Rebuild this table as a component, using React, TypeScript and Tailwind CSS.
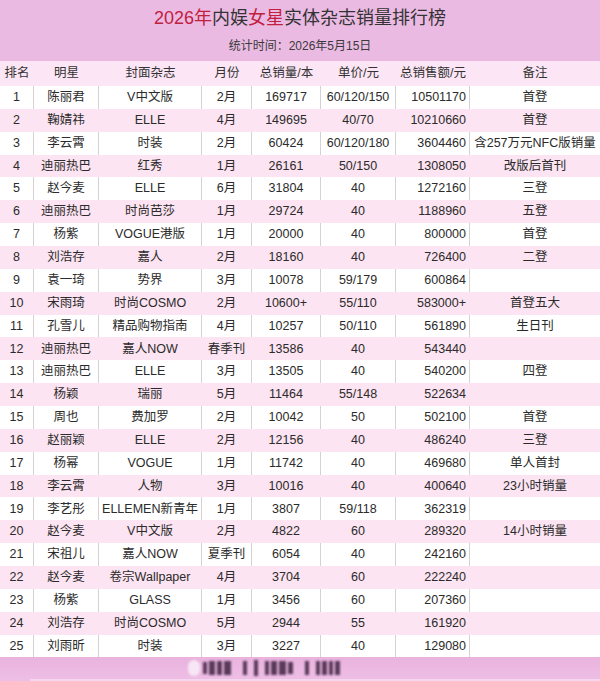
const ROWS: [string, string, string, string, string, string, string, string][] = [
  ['1', '陈丽君', 'V中文版', '2月', '169717', '60/120/150', '10501170', '首登'],
  ['2', '鞠婧祎', 'ELLE', '4月', '149695', '40/70', '10210660', '首登'],
  ['3', '李云霄', '时装', '2月', '60424', '60/120/180', '3604460', '含257万元NFC版销量'],
  ['4', '迪丽热巴', '红秀', '1月', '26161', '50/150', '1308050', '改版后首刊'],
  ['5', '赵今麦', 'ELLE', '6月', '31804', '40', '1272160', '三登'],
  ['6', '迪丽热巴', '时尚芭莎', '1月', '29724', '40', '1188960', '五登'],
  ['7', '杨紫', 'VOGUE港版', '1月', '20000', '40', '800000', '首登'],
  ['8', '刘浩存', '嘉人', '2月', '18160', '40', '726400', '二登'],
  ['9', '袁一琦', '势界', '3月', '10078', '59/179', '600864', ''],
  ['10', '宋雨琦', '时尚COSMO', '2月', '10600+', '55/110', '583000+', '首登五大'],
  ['11', '孔雪儿', '精品购物指南', '4月', '10257', '50/110', '561890', '生日刊'],
  ['12', '迪丽热巴', '嘉人NOW', '春季刊', '13586', '40', '543440', ''],
  ['13', '迪丽热巴', 'ELLE', '3月', '13505', '40', '540200', '四登'],
  ['14', '杨颖', '瑞丽', '5月', '11464', '55/148', '522634', ''],
  ['15', '周也', '费加罗', '2月', '10042', '50', '502100', '首登'],
  ['16', '赵丽颖', 'ELLE', '2月', '12156', '40', '486240', '三登'],
  ['17', '杨幂', 'VOGUE', '1月', '11742', '40', '469680', '单人首封'],
  ['18', '李云霄', '人物', '3月', '10016', '40', '400640', '23小时销量'],
  ['19', '李艺彤', 'ELLEMEN新青年', '1月', '3807', '59/118', '362319', ''],
  ['20', '赵今麦', 'V中文版', '2月', '4822', '60', '289320', '14小时销量'],
  ['21', '宋祖儿', '嘉人NOW', '夏季刊', '6054', '40', '242160', ''],
  ['22', '赵今麦', '卷宗Wallpaper', '4月', '3704', '60', '222240', ''],
  ['23', '杨紫', 'GLASS', '1月', '3456', '60', '207360', ''],
  ['24', '刘浩存', '时尚COSMO', '5月', '2944', '55', '161920', ''],
  ['25', '刘雨昕', '时装', '3月', '3227', '40', '129080', ''],
]

const HEADERS = ['排名', '明星', '封面杂志', '月份', '总销量/本', '单价/元', '总销售额/元', '备注']

// blurred watermark strokes in the footer: [width, height], width 0 = gap
const MARKS = [
  [4, 12], [6, 14], [5, 14], [7, 14], [0, 6], [0, 6], [4, 14], [0, 4], [4, 16], [0, 6],
  [4, 14], [6, 14], [7, 14], [5, 12], [0, 8], [0, 6], [4, 14], [0, 4], [4, 14], [5, 14], [4, 14], [5, 14],
]

export default function App() {
  return (
    <div className="w-[600px] h-[681px] overflow-hidden bg-white text-[#2b2b2b] font-['Liberation_Sans','Noto_Sans_CJK_SC',sans-serif]">
      <div className="h-[61px] bg-[#ebbae3] flex flex-col items-center">
        <h1 className="mt-[7px] text-[18px] leading-[23px] text-[#333]">
          <span className="text-[#c1203e]">2026年</span>内娱<span className="text-[#c1203e]">女星</span>实体杂志销量排行榜
        </h1>
        <div className="mt-[9px] text-[12px] leading-[14px] text-[#3a3a3a]">统计时间：2026年5月15日</div>
      </div>

      <div className="grid grid-cols-[34px_65px_103px_50px_69px_75px_74px_130px] h-[25px] bg-[#fce6f5] text-[12.5px] text-[#333]">
        {HEADERS.map((h) => (
          <div key={h} className="flex items-center justify-center whitespace-nowrap">{h}</div>
        ))}
      </div>

      {ROWS.map((r, i) => {
        const pink = i % 2 === 1
        return (
          <div
            key={r[0]}
            className={`grid grid-cols-[34px_65px_103px_50px_69px_75px_74px_130px] h-[22.86px] text-[12.5px] ${pink ? 'bg-[#fce4f2]' : 'bg-white'}`}
          >
            {r.map((c, j) => (
              <div
                key={j}
                className={`flex items-center whitespace-nowrap ${j === 6 ? 'justify-end pr-[3px]' : 'justify-center'} ${j < 7 ? (pink ? 'border-r border-[#fce4f2]' : 'border-r border-[#d6d2d4]') : ''}`}
              >
                {c}
              </div>
            ))}
          </div>
        )
      })}

      <div className="h-[24px] bg-gradient-to-b from-[#e9b3de] to-[#eebfe6] flex flex-col">
        <div className="flex-1 flex items-center pl-[188px]">
          <div className="w-[12px] h-[16px] rounded-full bg-[#f7e6f4] blur-[1px]" />
          <div className="flex items-center gap-[2px] ml-[3px] blur-[1.2px]">
            {MARKS.map(([w, h], k) => (
              <div key={k} className="bg-[#4a2c4c]" style={{ width: w || 3, height: h, opacity: w ? 0.9 : 0 }} />
            ))}
          </div>
        </div>
        <div className="h-[2px] ml-[30px] bg-[#f4d6ef]" />
      </div>
    </div>
  )
}
